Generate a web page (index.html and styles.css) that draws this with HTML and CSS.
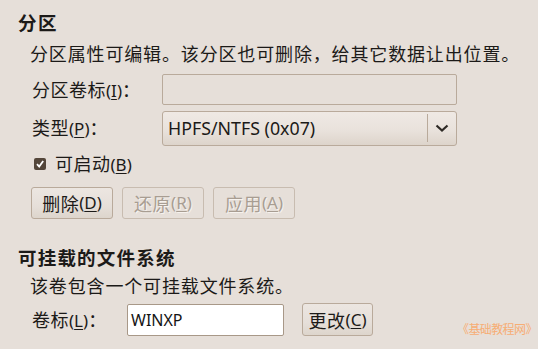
FILE: index.html
```html
<!DOCTYPE html>
<html lang="zh-CN">
<head>
<meta charset="utf-8">
<link rel="stylesheet" href="styles.css">
</head>
<body>
<div class="page">
  <section class="sec">
    <div class="title">分区</div>
    <div class="body">
      <div class="desc">分区属性可编辑。该分区也可删除，给其它数据让出位置。</div>
      <div class="grid">
        <div class="lbl">分区卷标<span class="lat">(<u>I</u>)</span>：</div>
        <div class="entry disabled"></div>
        <div class="lbl">类型<span class="lat">(<u>P</u>)</span>：</div>
        <div class="combo">
          <span class="combo-text lat">HPFS/NTFS (0x07)</span>
          <span class="combo-btn">
            <svg width="14" height="10" viewBox="0 0 14 10"><path d="M1.5 2.5 L7 7.5 L12.5 2.5" fill="none" stroke="#2e2a26" stroke-width="2.2"/></svg>
          </span>
        </div>
      </div>
      <div class="check-row">
        <span class="check">
          <svg width="12" height="12" viewBox="0 0 12 12"><rect x="0" y="0" width="12" height="12" rx="2" fill="#54463a"/><path d="M3 6.2 L5.2 8.6 L9.2 3" fill="none" stroke="#ffffff" stroke-width="1.8"/></svg>
        </span>
        <span class="check-text">可启动<span class="lat">(<u>B</u>)</span></span>
      </div>
      <div class="buttons">
        <div class="btn">删除<span class="lat">(<u>D</u>)</span></div>
        <div class="btn off">还原<span class="lat">(<u>R</u>)</span></div>
        <div class="btn off">应用<span class="lat">(<u>A</u>)</span></div>
      </div>
    </div>
  </section>
  <section class="sec sec2">
    <div class="title">可挂载的文件系统</div>
    <div class="body">
      <div class="desc">该卷包含一个可挂载文件系统。</div>
      <div class="row">
        <div class="lbl lbl2">卷标<span class="lat">(<u>L</u>)</span>：</div>
        <div class="entry white"><span class="lat entry-text">WINXP</span></div>
        <div class="btn btn-c">更改<span class="lat">(<u>C</u>)</span></div>
      </div>
    </div>
  </section>
</div>
<div class="mark">《基础教程网》</div>
</body>
</html>
```

FILE: styles.css
```css
html, body {
  margin: 0;
  padding: 0;
}
body {
  width: 538px;
  height: 349px;
  background: #e6dfd9;
  color: #1c1a18;
  font-family: "Noto Sans CJK SC", "Noto Sans", sans-serif;
  font-size: 18px;
  position: relative;
  overflow: hidden;
}
.page {
  padding: 10px 0 0 18px;
}
.lat {
  font-family: "Noto Sans", "Open Sans", sans-serif;
  font-size: 17px;
  letter-spacing: 0;
}
u {
  text-decoration-thickness: 1px;
  text-underline-offset: 2px;
}
.title {
  font-weight: bold;
  font-size: 18.5px;
  line-height: 24px;
  height: 24px;
  letter-spacing: 1.4px;
}
.body {
  padding-left: 12px;
}
.desc {
  margin-top: 7px;
  line-height: 24px;
  height: 24px;
  letter-spacing: 0.85px;
}
.grid {
  margin-top: 9px;
  padding-left: 2px;
  display: grid;
  grid-template-columns: 130px 295px;
  grid-template-rows: 31px 34px;
  row-gap: 6px;
  align-items: center;
}
.lbl {
  line-height: 24px;
  letter-spacing: 0.5px;
  white-space: nowrap;
}
.entry {
  box-sizing: border-box;
  height: 31px;
  border: 1px solid #b9aa9b;
  border-radius: 2px;
}
.entry.disabled {
  background: #e6dfd9;
}
.combo {
  box-sizing: border-box;
  height: 35px;
  border: 1px solid #b9aa9b;
  border-radius: 3px;
  background: linear-gradient(#efe9e4, #e9e2dc 55%, #ddd4cb);
  display: flex;
  align-items: center;
}
.combo-text {
  flex: 1;
  padding-left: 5px;
  font-size: 17.8px;
}
.combo-btn {
  width: 28px;
  height: 28px;
  border-left: 1px solid #b9aa9b;
  display: flex;
  align-items: center;
  justify-content: center;
}
.check-row {
  margin-top: 8px;
  padding-left: 4px;
  height: 22px;
  display: flex;
  align-items: center;
  gap: 9px;
}
.check {
  display: flex;
  width: 12px;
  height: 12px;
}
.check-text {
  line-height: 22px;
  letter-spacing: 0.5px;
}
.buttons {
  margin-top: 12px;
  padding-left: 1px;
  display: flex;
  gap: 9px;
}
.btn {
  box-sizing: border-box;
  width: 82px;
  height: 32px;
  border: 1px solid #b9aa9b;
  border-radius: 3px;
  background: linear-gradient(#ece6e1, #e6dfd9 60%, #ddd5cc);
  display: flex;
  align-items: center;
  justify-content: center;
  letter-spacing: 0.5px;
  line-height: 24px;
}
.btn.off {
  color: #a89d92;
  text-shadow: 1px 1px 0 #f6f2ee;
  background: #e6dfd9;
  border-color: #c8bcb0;
}
.sec2 {
  margin-top: 26px;
}
.sec2 .title {
  letter-spacing: 1.2px;
}
.sec2 .desc {
  margin-top: 4px;
}
.row {
  margin-top: 6px;
  padding-left: 2px;
  display: flex;
  align-items: center;
  height: 33px;
}
.lbl2 {
  width: 95px;
}
.entry.white {
  width: 157px;
  height: 32px;
  background: #ffffff;
  display: flex;
  align-items: center;
  padding-left: 3px;
  border-color: #a89888;
}
.entry-text {
  font-size: 16px;
  color: #141414;
}
.btn-c {
  margin-left: 18px;
  width: 71px;
  height: 33px;
}
.mark {
  position: absolute;
  left: 457px;
  top: 320px;
  font-size: 12px;
  line-height: 18px;
  letter-spacing: -0.6px;
  color: #f7ad74;
  white-space: nowrap;
}
```
